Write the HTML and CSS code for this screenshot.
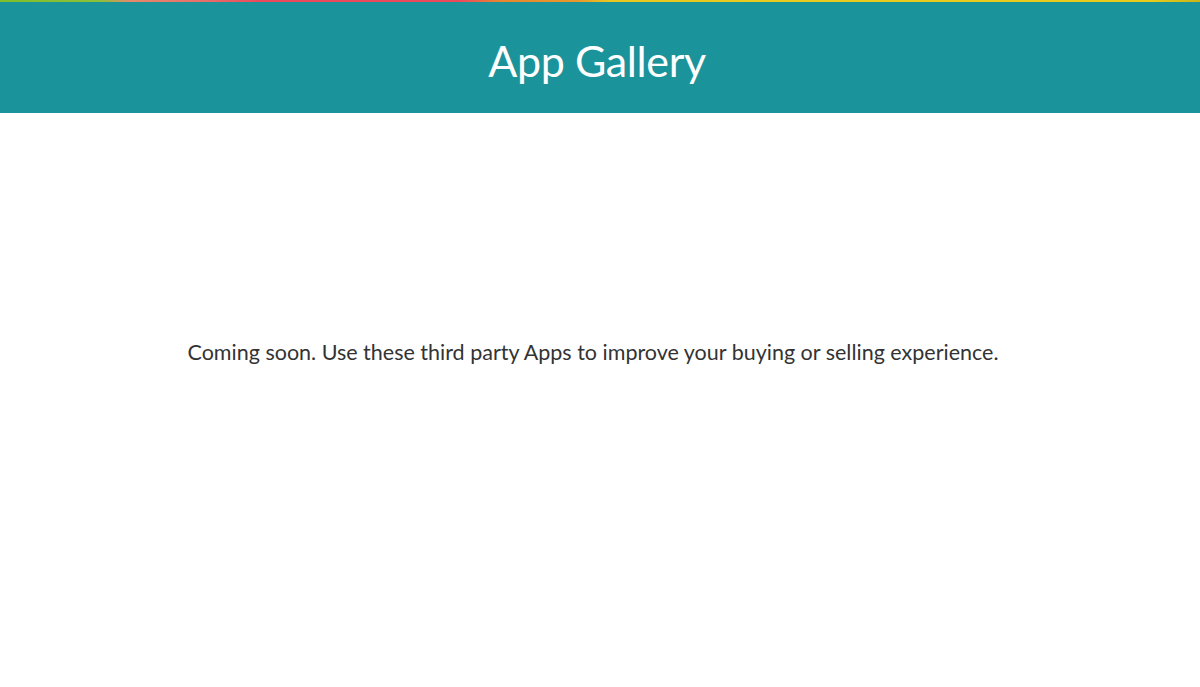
FILE: index.html
```html
<!DOCTYPE html>
<html lang="en">
<head>
<meta charset="utf-8">
<title>App Gallery</title>
<link rel="stylesheet" href="styles.css">
</head>
<body>
<header class="hero">
  <div class="stripe"></div>
  <h1 class="hero-title">App Gallery</h1>
</header>
<main class="content">
  <p class="notice">Coming soon. Use these third party Apps to improve your buying or selling experience.</p>
</main>
</body>
</html>
```
FILE: styles.css
```css
html, body {
  margin: 0;
  padding: 0;
  background: #ffffff;
}
body {
  font-family: Lato, "Liberation Sans", sans-serif;
  color: #333333;
}
.hero {
  background: #1b939b;
  height: 113px;
  display: flex;
  flex-direction: column;
}
.stripe {
  height: 2px;
  background: linear-gradient(to right,
    #7fbf2a 0px, #8cc03a 100px, #e58a6a 130px, #e8706a 200px,
    #ec4a5c 260px, #ec4a5c 460px, #e8862f 500px, #e89a2c 580px,
    #e8c81e 610px, #e8cc1c 1150px, #c9b41a 1200px);
}
.hero-title {
  flex: 1;
  margin: 0;
  display: flex;
  align-items: center;
  justify-content: center;
  font-weight: 400;
  font-size: 43px;
  color: #ffffff;
  letter-spacing: -0.4px;
  padding-top: 5px;
  padding-right: 6px;
}
.content {
  display: flex;
  justify-content: center;
  padding-top: 223px;
  padding-right: 14px;
}
.notice {
  margin: 0;
  font-size: 21.5px;
  line-height: 32px;
  color: #333333;
}
```
